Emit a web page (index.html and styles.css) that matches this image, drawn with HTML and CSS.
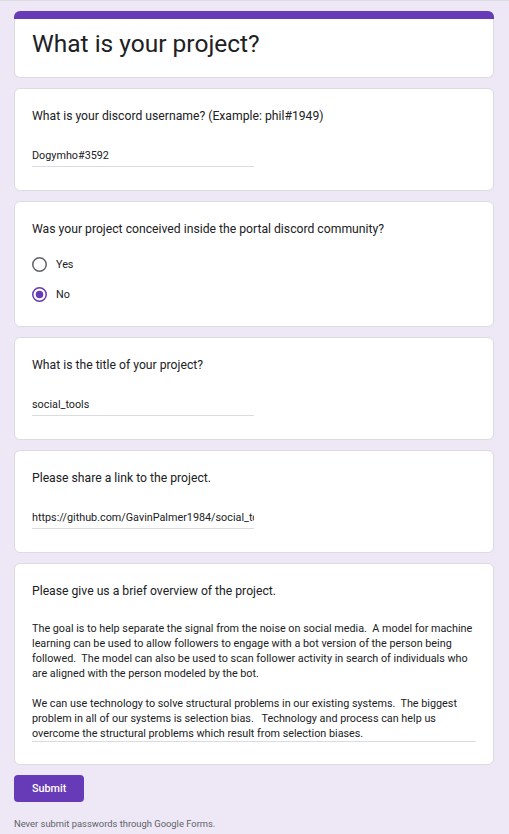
FILE: index.html
```html
<!DOCTYPE html>
<html lang="en">
<head>
<meta charset="utf-8">
<title>What is your project?</title>
<link rel="stylesheet" href="styles.css">
</head>
<body>
<div class="form">
  <div class="header">
    <div class="bar"></div>
    <div class="header-card">
      <h1 class="title">What is your project?</h1>
    </div>
  </div>

  <div class="card">
    <div class="question">What is your discord username? (Example: phil#1949)</div>
    <div class="input">Dogymho#3592</div>
  </div>

  <div class="card choice">
    <div class="question">Was your project conceived inside the portal discord community?</div>
    <div class="options">
      <div class="option">
        <svg class="radio" viewBox="0 0 20 20" width="15" height="15"><circle cx="10" cy="10" r="9" fill="none" stroke="#5f6368" stroke-width="2"/></svg>
        <span>Yes</span>
      </div>
      <div class="option">
        <svg class="radio" viewBox="0 0 20 20" width="15" height="15"><circle cx="10" cy="10" r="9" fill="none" stroke="#673ab7" stroke-width="2"/><circle cx="10" cy="10" r="5" fill="#673ab7"/></svg>
        <span>No</span>
      </div>
    </div>
  </div>

  <div class="card">
    <div class="question">What is the title of your project?</div>
    <div class="input">social_tools</div>
  </div>

  <div class="card">
    <div class="question">Please share a link to the project.</div>
    <div class="input">https://github.com/GavinPalmer1984/social_tools</div>
  </div>

  <div class="card long">
    <div class="question">Please give us a brief overview of the project.</div>
    <div class="textarea">The goal is to help separate the signal from the noise on social media.  A model for machine
learning can be used to allow followers to engage with a bot version of the person being
followed.  The model can also be used to scan follower activity in search of individuals who
are aligned with the person modeled by the bot.

We can use technology to solve structural problems in our existing systems.  The biggest
problem in all of our systems is selection bias.   Technology and process can help us
overcome the structural problems which result from selection biases.</div>
  </div>

  <button class="submit" type="button">Submit</button>
  <div class="footer">Never submit passwords through Google Forms.</div>
</div>
</body>
</html>
```

FILE: styles.css
```css
html, body {
  margin: 0;
}

body {
  background: #ede7f6;
  border-top: 1px solid #dadce0;
  font-family: Roboto, "Liberation Sans", sans-serif;
  color: #202124;
  min-height: 833px;
}

.form {
  width: 480px;
  margin-left: 14px;
  padding-top: 10px;
  display: flex;
  flex-direction: column;
  gap: 10px;
}

.bar {
  height: 8px;
  background: #673ab7;
  border-radius: 6px 6px 0 0;
}

.header-card {
  background: #fff;
  border: 1px solid #dadce0;
  border-top: 0;
  border-radius: 0 0 6px 6px;
  padding: 10px 17px 18px;
}

.title {
  margin: 0;
  font-size: 24.5px;
  line-height: 30px;
  font-weight: 400;
}

.card {
  background: #fff;
  border: 1px solid #dadce0;
  border-radius: 6px;
  padding: 18px 17px 23px;
}

.card.choice {
  padding-bottom: 17px;
}

.card.long {
  padding-bottom: 22px;
}

.question {
  font-size: 12.2px;
  line-height: 18px;
}

.input {
  margin-top: 23px;
  width: 222px;
  font-size: 10.8px;
  line-height: 16px;
  padding-bottom: 2px;
  border-bottom: 1px solid #dadce0;
  white-space: nowrap;
  overflow: hidden;
}

.options {
  margin-top: 11px;
  display: flex;
  flex-direction: column;
}

.option {
  height: 30px;
  display: flex;
  align-items: center;
  gap: 9px;
  font-size: 10.8px;
}

.radio {
  display: block;
  flex: none;
}

.textarea {
  margin-top: 21px;
  font-size: 10.8px;
  line-height: 15px;
  border-bottom: 1px solid #dadce0;
  white-space: pre;
}

.submit {
  align-self: flex-start;
  height: 27px;
  padding: 0 18px;
  border: 0;
  border-radius: 4px;
  background: #673ab7;
  color: #fff;
  font-family: Roboto, "Liberation Sans", sans-serif;
  font-size: 10.8px;
  font-weight: 500;
}

.footer {
  margin-top: 6px;
  font-size: 9.4px;
  line-height: 12px;
  color: #5f6368;
}
```
